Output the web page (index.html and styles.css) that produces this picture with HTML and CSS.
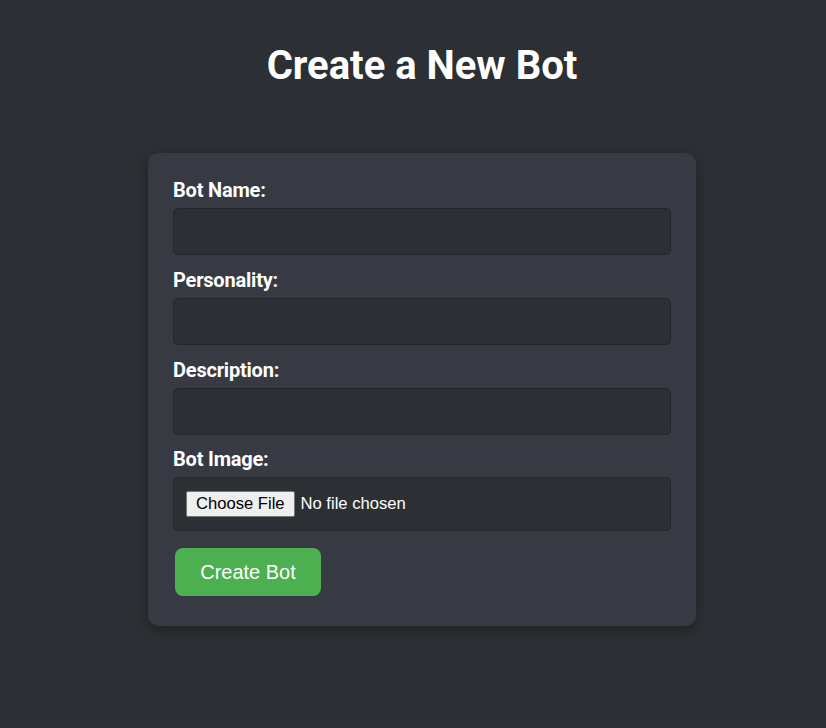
FILE: index.html
```html
<!DOCTYPE html>
<html lang="en">
<head>
<meta charset="utf-8">
<title>Create a New Bot</title>
<link rel="stylesheet" href="styles.css">
</head>
<body>
<h1 class="title">Create a New Bot</h1>
<form class="card">
  <label class="label" for="name">Bot Name:</label>
  <input class="field" id="name" type="text">
  <label class="label" for="personality">Personality:</label>
  <input class="field" id="personality" type="text">
  <label class="label" for="description">Description:</label>
  <input class="field" id="description" type="text">
  <label class="label label-file" for="image">Bot Image:</label>
  <input class="field file" id="image" type="file">
  <button class="submit" type="button">Create Bot</button>
</form>
</body>
</html>
```
FILE: styles.css
```css
html, body {
  margin: 0;
  padding: 0;
}
body {
  background: #2c2f33;
  color: #ffffff;
  font-family: Roboto, "Liberation Sans", sans-serif;
  min-height: 728px;
  padding-top: 42px;
  box-sizing: border-box;
}
.title {
  margin: 0 0 64px 0;
  text-align: center;
  font-size: 40px;
  line-height: 47px;
  font-weight: 700;
  padding-left: 18px;
}
.card {
  width: 548px;
  box-sizing: border-box;
  margin-left: 148px;
  background: #373a42;
  border-radius: 10px;
  padding: 25px 25px 30px 25px;
  box-shadow: 0 4px 12px rgba(0, 0, 0, 0.3);
  display: flex;
  flex-direction: column;
  align-items: flex-start;
}
.label {
  display: block;
  font-size: 20px;
  font-weight: 700;
  line-height: 21px;
  padding-top: 2px;
  margin-bottom: 7px;
  letter-spacing: -0.2px;
}
.label-file {
  margin-top: -1px;
}
.field {
  width: 100%;
  height: 47px;
  box-sizing: border-box;
  background: #2c2f33;
  border: 1px solid #23262a;
  border-radius: 5px;
  margin: 0 0 13px 0;
  padding: 12px;
  color: #ffffff;
  font-size: 16.6px;
  font-family: "Liberation Sans", Arial, sans-serif;
  outline: none;
}
.file {
  height: 54px;
  padding: 13px 12px 11px 12px;
  margin-bottom: 17px;
}
.file::file-selector-button {
  font-family: "Liberation Sans", Arial, sans-serif;
  font-size: 16.6px;
  background: #efefef;
  color: #000000;
  border: 1px solid #767676;
  border-radius: 2px;
  padding: 2px 9px;
  margin-right: 6px;
}
.submit {
  margin-left: 2px;
  width: 146px;
  height: 48px;
  background: #4caf50;
  color: #ffffff;
  border: none;
  border-radius: 8px;
  font-family: "Liberation Sans", Arial, sans-serif;
  font-size: 20px;
  cursor: pointer;
}
```
